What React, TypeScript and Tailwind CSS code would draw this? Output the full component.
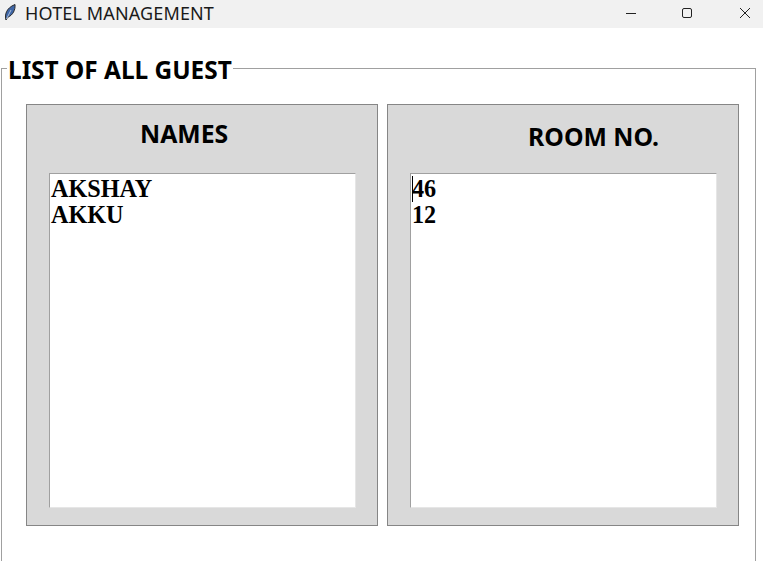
import React from 'react';

const sans = "font-['Noto_Sans','Open_Sans',sans-serif]";

const ListPanel: React.FC<{ title: string; titleClass: string; rows: string[]; caret?: boolean }> = ({ title, titleClass, rows, caret }) => (
  <div className="w-[352px] h-[422px] border border-[#868686] bg-[#d9d9d9] flex flex-col">
    <h2 className={`font-bold text-[24.8px] leading-[32px] text-black ${sans} ${titleClass}`}>{title}</h2>
    <div className="relative ml-[22px] w-[307px] h-[335px] bg-white border-t border-l border-t-[#a0a0a0] border-l-[#a0a0a0] border-r border-b border-r-[#e6e6e6] border-b-[#e6e6e6] pl-[1px] pt-[2px] font-['Liberation_Serif',serif] font-bold text-[24.2px] leading-[26px] text-black">
      {caret && <span className="absolute left-[1px] top-[2px] w-[1px] h-[26px] bg-black" />}
      {rows.map(r => (
        <div key={r}>{r}</div>
      ))}
    </div>
  </div>
);

export default function App() {
  return (
    <div className="w-[763px] h-[561px] overflow-hidden bg-white flex flex-col">
      {/* Title bar */}
      <div className="h-[28px] shrink-0 bg-[#f1f1f1] flex items-center pb-[3px]">
        <svg className="ml-[4px] w-[12px] h-[17px]" viewBox="0 0 12 17">
          <path d="M2 16 C0.5 11 2 4 11 0.5 C11.5 6 9 11 3.5 13.5 Z" fill="#3f66a6" stroke="#2b2b2b" strokeWidth="1" />
          <path d="M2.5 15 L7 6" stroke="#b9c9e2" strokeWidth="0.9" fill="none" />
        </svg>
        <span className={`ml-[9px] text-[18px] tracking-[0.14px] leading-[24px] text-[#1a1a1a] ${sans}`}>HOTEL MANAGEMENT</span>
        <div className="ml-auto flex items-center">
          <svg className="w-[12px] h-[12px] mr-[44px]" viewBox="0 0 12 12">
            <path d="M1 6.5 H11" stroke="#222" strokeWidth="1" />
          </svg>
          <svg className="w-[12px] h-[12px] mr-[46px]" viewBox="0 0 12 12">
            <rect x="1.5" y="1.5" width="9" height="9" rx="1.5" fill="none" stroke="#222" strokeWidth="1" />
          </svg>
          <svg className="w-[12px] h-[12px] mr-[12px]" viewBox="0 0 12 12">
            <path d="M1 1 L11 11 M11 1 L1 11" stroke="#222" strokeWidth="1" />
          </svg>
        </div>
      </div>

      {/* Guest list frame */}
      <fieldset className="mt-[23px] ml-[1px] w-[755px] h-[600px] shrink-0 border border-[#a0a0a0]">
        <legend className={`ml-[5px] px-[1px] pt-[3px] font-bold text-[24.4px] leading-[32px] text-black ${sans}`}>LIST OF ALL GUEST</legend>
        <div className="mt-[18px] pl-[24px] flex gap-[9px]">
          <ListPanel title="NAMES" titleClass="mt-[12px] mb-[24px] pl-[113px]" rows={['AKSHAY', 'AKKU']} />
          <ListPanel title="ROOM NO." titleClass="mt-[15px] mb-[21px] pl-[140px]" rows={['46', '12']} caret />
        </div>
      </fieldset>
    </div>
  );
}
